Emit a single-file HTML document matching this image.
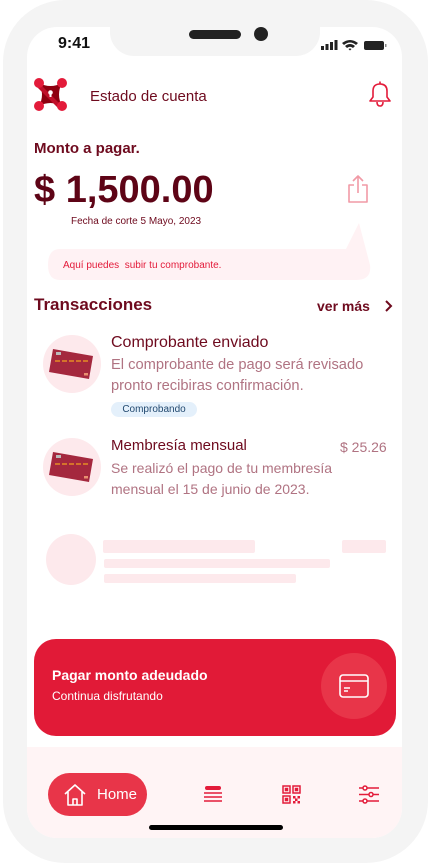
<!DOCTYPE html>
<html><head><meta charset="utf-8"><style>
*{margin:0;padding:0;box-sizing:border-box}
body{width:431px;height:864px;background:#fff;font-family:"Liberation Sans",sans-serif;position:relative;overflow:hidden}
.abs{position:absolute}
.frame{left:3px;top:0;width:425px;height:863px;background:#f4f4f4;border-radius:62px}
.screen{left:27px;top:27px;width:375px;height:811px;background:#fff;border-radius:30px;overflow:hidden}
.notch{left:110px;top:20px;width:210px;height:36px;background:#f4f4f4;border-radius:0 0 24px 24px}
.muted{color:#b07382}
</style></head><body>
<div class="abs frame"></div>
<div class="abs screen">
  <div class="abs" style="left:0;top:720px;width:375px;height:100px;background:#fff4f5"></div>
</div>
<div class="abs notch"></div>
<div class="abs" style="left:189px;top:30px;width:52px;height:9px;background:#222;border-radius:5px"></div>
<div class="abs" style="left:254px;top:27px;width:14px;height:14px;background:#222;border-radius:50%"></div>
<div class="abs" style="left:58px;top:35px;font-size:16px;font-weight:bold;color:#111">9:41</div>
<svg class="abs" style="left:320px;top:38px" width="68" height="14" viewBox="0 0 68 14">
<rect x="1" y="8" width="3" height="4" fill="#222"/><rect x="5.5" y="6" width="3" height="6" fill="#222"/><rect x="10" y="4" width="3" height="8" fill="#222"/><rect x="14.5" y="2" width="3" height="10" fill="#222"/>
<path d="M22 5 Q30 -1 38 5 L36 7 Q30 2 24 7Z M25 8 Q30 4 35 8 L33 10 Q30 7.5 27 10Z M28.5 11 L30 12.5 L31.5 11 Q30 10 28.5 11Z" fill="#222"/>
<rect x="44" y="3" width="20" height="9" rx="2" fill="#222"/><rect x="65" y="6" width="1.5" height="3" fill="#888"/>
</svg>
<!-- logo -->
<svg class="abs" style="left:34px;top:78px" width="33" height="33" viewBox="0 0 33 33">
<path d="M5 5 Q16.5 11 28 5 Q22 16.5 28 28 Q16.5 22 5 28 Q11 16.5 5 5Z" fill="#8e0010"/>
<path d="M5 5 L28 28 L24 30 L3 9Z" fill="#c0102a"/>
<circle cx="5" cy="5" r="5" fill="#e31b3a"/><circle cx="28" cy="5" r="5" fill="#e31b3a"/><circle cx="5" cy="28" r="5" fill="#e31b3a"/><circle cx="28" cy="28" r="5" fill="#e31b3a"/>
<circle cx="16.5" cy="14.5" r="2.3" fill="#fff"/><rect x="15.5" y="14.5" width="2" height="4.5" fill="#fff"/>
</svg>
<div class="abs" style="left:90px;top:88px;font-size:15px;color:#6e0a1e">Estado de cuenta</div>
<svg class="abs" style="left:366px;top:80px" width="28" height="30" viewBox="0 0 28 30">
<path d="M4 21 L7 17 L7 11 Q7 4 14 4 Q21 4 21 11 L21 17 L24 21Z M11 22 Q11 26 14 26 Q17 26 17 22" fill="none" stroke="#e31b3a" stroke-width="1.6" stroke-linejoin="round"/>
<path d="M14 1.5 V4" stroke="#e31b3a" stroke-width="1.6"/>
</svg>
<div class="abs" style="left:34px;top:140px;font-size:15px;font-weight:bold;color:#6e0a1e">Monto a pagar.</div>
<div class="abs" style="left:34px;top:169px;font-size:38px;font-weight:bold;color:#5e0416">$ 1,500.00</div>
<div class="abs" style="left:71px;top:216px;font-size:10px;color:#6e0a1e">Fecha de corte 5 Mayo, 2023</div>
<svg class="abs" style="left:345px;top:174px" width="26" height="30" viewBox="0 0 26 30">
<path d="M9 11 H4 V28 H22 V11 H17 M13 2 V19 M8 7 L13 2 L18 7" fill="none" stroke="#f19aa6" stroke-width="1.6" stroke-linejoin="round"/>
</svg>
<svg class="abs" style="left:46px;top:220px" width="330" height="62" viewBox="0 0 330 62">
<path d="M14 29 H300 L313 3 L324 45 Q326 60 310 60 H14 Q2 60 2 45 Q2 29 14 29Z" fill="#fff2f4"/>
</svg>
<div class="abs" style="left:63px;top:260px;font-size:10px;color:#e31b3a">Aquí puedes&nbsp; subir tu comprobante.</div>
<div class="abs" style="left:34px;top:295px;font-size:17px;font-weight:bold;color:#6e0a1e">Transacciones</div>
<div class="abs" style="left:317px;top:298px;font-size:14px;font-weight:bold;color:#6e0a1e">ver más</div>
<svg class="abs" style="left:384px;top:300px" width="10" height="12" viewBox="0 0 10 12"><path d="M2 1 L7 6 L2 11" fill="none" stroke="#6e0a1e" stroke-width="2"/></svg>

<svg class="abs" style="left:43px;top:335px" width="58" height="58" viewBox="0 0 58 58">
<circle cx="29" cy="29" r="29" fill="#fde9ec"/>
<path d="M10 14 L50 21 L46 44 L6 37Z" fill="#a4283e"/>
<rect x="13" y="17" width="5" height="3" fill="#bbb"/>
<path d="M12 26 H45" stroke="#f0a020" stroke-width="1.3" stroke-dasharray="5 2"/>
<rect x="41" y="38" width="4" height="2.5" fill="#e89070"/>
</svg>
<div class="abs" style="left:111px;top:334px;font-size:16px;color:#6e0a1e">Comprobante enviado</div>
<div class="abs muted" style="left:111px;top:355px;font-size:14.7px;line-height:21px">El comprobante de pago será revisado<br>pronto recibiras confirmación.</div>
<div class="abs" style="left:111px;top:402px;width:86px;height:15px;background:#e4f0fb;border-radius:8px;font-size:10px;color:#234a70;text-align:center;line-height:15px">Comprobando</div>

<svg class="abs" style="left:43px;top:438px" width="58" height="58" viewBox="0 0 58 58">
<circle cx="29" cy="29" r="29" fill="#fde9ec"/>
<path d="M10 14 L50 21 L46 44 L6 37Z" fill="#a4283e"/>
<rect x="13" y="17" width="5" height="3" fill="#bbb"/>
<path d="M12 26 H45" stroke="#f0a020" stroke-width="1.3" stroke-dasharray="5 2"/>
<rect x="41" y="38" width="4" height="2.5" fill="#e89070"/>
</svg>
<div class="abs" style="left:111px;top:437px;font-size:15px;color:#6e0a1e">Membresía mensual</div>
<div class="abs muted" style="left:340px;top:439px;font-size:14px">$ 25.26</div>
<div class="abs muted" style="left:111px;top:458px;font-size:14px;line-height:21px">Se realizó el pago de tu membresía<br>mensual el 15 de junio de 2023.</div>

<div class="abs" style="left:46px;top:534px;width:50px;height:51px;border-radius:50%;background:#fde9ec"></div>
<div class="abs" style="left:103px;top:540px;width:152px;height:13px;border-radius:2px;background:#fde9ec"></div>
<div class="abs" style="left:342px;top:540px;width:44px;height:13px;border-radius:2px;background:#fde9ec"></div>
<div class="abs" style="left:104px;top:559px;width:226px;height:9px;border-radius:2px;background:#fde9ec"></div>
<div class="abs" style="left:104px;top:574px;width:192px;height:9px;border-radius:2px;background:#fde9ec"></div>

<div class="abs" style="left:34px;top:639px;width:362px;height:97px;background:#e11a37;border-radius:22px"></div>
<div class="abs" style="left:52px;top:667px;font-size:14px;font-weight:bold;color:#fff">Pagar monto adeudado</div>
<div class="abs" style="left:52px;top:689px;font-size:12px;color:#fff">Continua disfrutando</div>
<div class="abs" style="left:321px;top:653px;width:66px;height:66px;border-radius:50%;background:#e83549"></div>
<svg class="abs" style="left:338px;top:673px" width="32" height="28" viewBox="0 0 32 28">
<rect x="2" y="2" width="28" height="22" rx="3" fill="none" stroke="#fff" stroke-width="1.6"/>
<path d="M2 8 H30" stroke="#fff" stroke-width="1.6"/><path d="M6 15 H12 M6 18 H10" stroke="#fff" stroke-width="1.4"/>
</svg>

<div class="abs" style="left:48px;top:773px;width:99px;height:43px;border-radius:22px;background:#e83549"></div>
<svg class="abs" style="left:63px;top:783px" width="24" height="24" viewBox="0 0 24 24"><path d="M2 11 L12 2 L22 11 M5 9 V22 H19 V9 M10 22 V16 H14 V22" fill="none" stroke="#fff" stroke-width="1.6" stroke-linejoin="round"/></svg>
<div class="abs" style="left:97px;top:786px;font-size:15px;color:#fff">Home</div>
<svg class="abs" style="left:204px;top:785px" width="18" height="18" viewBox="0 0 18 18"><rect x="1" y="1" width="16" height="4" rx="2" fill="#e31b3a"/><path d="M0 8 H18 M0 12 H18 M0 16 H18" stroke="#e31b3a" stroke-width="1.4"/></svg>
<svg class="abs" style="left:282px;top:785px" width="19" height="19" viewBox="0 0 19 19" fill="none" stroke="#e31b3a" stroke-width="1.5"><rect x="1" y="1" width="7" height="7"/><rect x="11" y="1" width="7" height="7"/><rect x="1" y="11" width="7" height="7"/><rect x="3.5" y="3.5" width="2" height="2" fill="#e31b3a"/><rect x="13.5" y="3.5" width="2" height="2" fill="#e31b3a"/><rect x="3.5" y="13.5" width="2" height="2" fill="#e31b3a"/><g fill="#e31b3a" stroke="none"><rect x="11" y="11" width="2.5" height="2.5"/><rect x="15.5" y="11" width="2.5" height="2.5"/><rect x="13" y="13.5" width="2.5" height="2.5"/><rect x="11" y="16" width="2.5" height="2.5"/><rect x="15.5" y="16" width="2.5" height="2.5"/></g></svg>
<svg class="abs" style="left:359px;top:785px" width="20" height="19" viewBox="0 0 20 19" fill="none" stroke="#e31b3a" stroke-width="1.5"><path d="M0 3 H20 M0 9.5 H20 M0 16 H20"/><circle cx="6" cy="3" r="2" fill="#fff"/><circle cx="12" cy="9.5" r="2" fill="#fff"/><circle cx="6" cy="16" r="2" fill="#fff"/></svg>
<div class="abs" style="left:149px;top:825px;width:134px;height:5px;border-radius:3px;background:#000"></div>
</body></html>
